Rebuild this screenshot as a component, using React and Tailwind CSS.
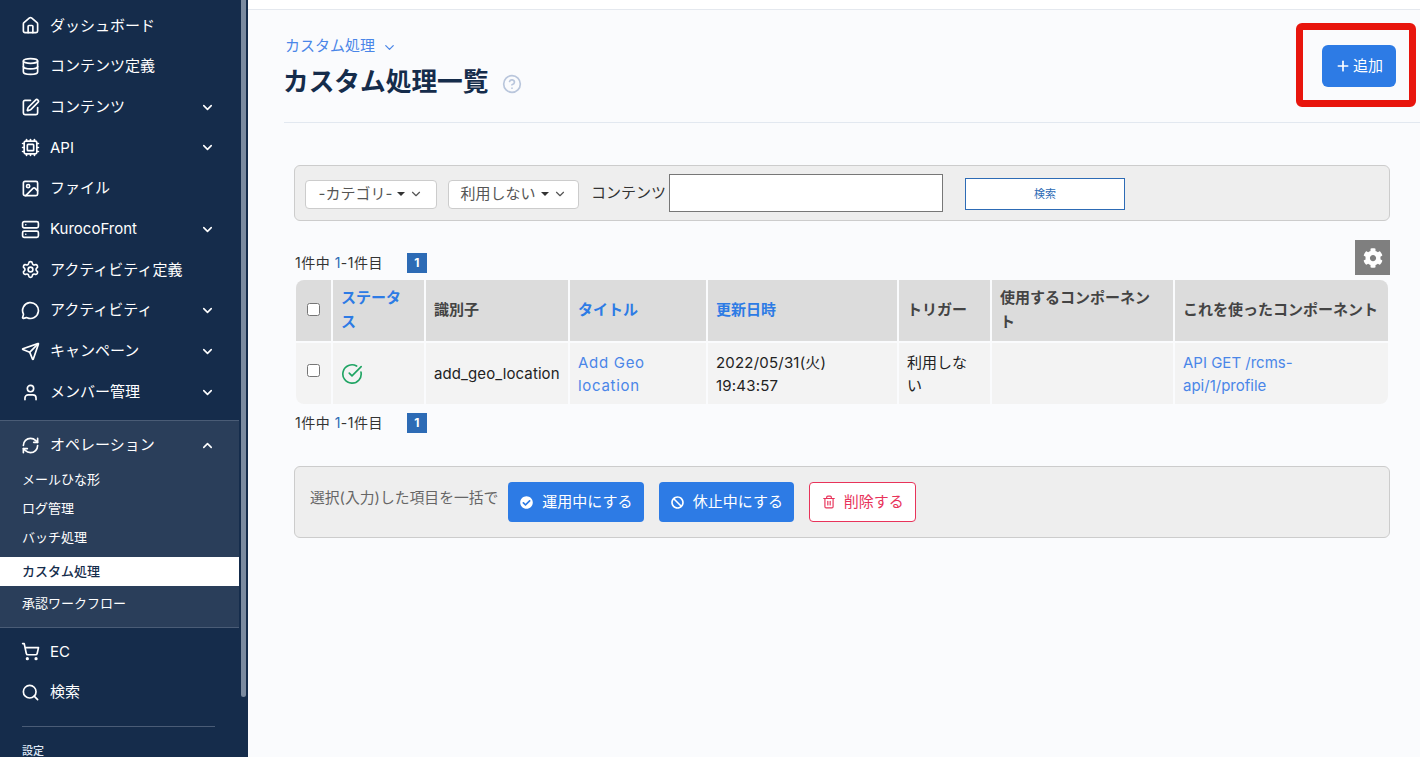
import {
  House,
  Database,
  SquarePen,
  Cpu,
  Image,
  Server,
  Settings,
  MessageCircle,
  Send,
  User,
  RefreshCw,
  ShoppingCart,
  Search,
  ChevronDown,
  ChevronUp,
  CircleHelp,
  CircleCheckBig,
  Trash2,
  Plus,
} from "lucide-react";
import { FaCog, FaCheckCircle, FaBan } from "react-icons/fa";

const topMenu = [
  { label: "ダッシュボード", icon: House },
  { label: "コンテンツ定義", icon: Database },
  { label: "コンテンツ", icon: SquarePen, arrow: true },
  { label: "API", icon: Cpu, arrow: true },
  { label: "ファイル", icon: Image },
  { label: "KurocoFront", icon: Server, arrow: true },
  { label: "アクティビティ定義", icon: Settings },
  { label: "アクティビティ", icon: MessageCircle, arrow: true },
  { label: "キャンペーン", icon: Send, arrow: true },
  { label: "メンバー管理", icon: User, arrow: true },
];

function MenuRow({ label, icon: Icon, arrow, up }) {
  return (
    <div className="flex h-[40.7px] items-center pl-[21px] pr-[24px] text-[15px] text-white">
      <Icon size={19} strokeWidth={2.1} className="mr-[10px] shrink-0" />
      <span className="flex-1">{label}</span>
      {arrow && <ChevronDown size={15} strokeWidth={2.5} />}
      {up && <ChevronUp size={15} strokeWidth={2.5} />}
    </div>
  );
}

function Sidebar() {
  return (
    <aside className="flex h-[757px] w-[248px] shrink-0 overflow-hidden bg-[#152c4b]">
      <div className="w-[239px] shrink-0">
        <div className="pt-[5.5px] pb-[7.5px]">
          {topMenu.map((m) => (
            <MenuRow key={m.label} {...m} />
          ))}
        </div>
        <div className="border-y border-[#4a5c76] bg-[#2a3e5a] pb-[8px] pt-[4px]">
          <MenuRow label="オペレーション" icon={RefreshCw} up />
          <div className="text-[13px] text-white">
            <div className="flex h-[29px] items-center pl-[22px]">メールひな形</div>
            <div className="flex h-[29px] items-center pl-[22px]">ログ管理</div>
            <div className="flex h-[29px] items-center pl-[22px]">バッチ処理</div>
            <div className="mt-[4.5px] flex h-[29px] items-center bg-white pl-[22px] font-medium text-[#152c4b]">
              カスタム処理
            </div>
            <div className="mt-[3.5px] flex h-[29px] items-center pl-[22px]">承認ワークフロー</div>
          </div>
        </div>
        <div className="pt-[4px]">
          <MenuRow label="EC" icon={ShoppingCart} />
          <MenuRow label="検索" icon={Search} />
        </div>
        <div className="mx-[22px] mt-[13px] w-[193px] border-t border-[#4a5c76]" />
        <div className="pl-[22px] pt-[19px] text-[11px] font-medium leading-[10px] text-[#dfe8f5]">設定</div>
      </div>
      <div className="w-[9px] shrink-0 pl-[2px]">
        <div className="h-[697px] w-[5px] rounded-b bg-[#7b8ba0]" />
      </div>
    </aside>
  );
}

function Pager() {
  return (
    <div className="flex items-center pl-[1px] text-[14px] leading-[20px] tracking-[0.5px] text-[#333]">
      <span className="w-[112px]">
        1件中 <span className="text-[#2d6bb5]">1</span>-1件目
      </span>
      <span className="flex h-[20px] w-[20px] items-center justify-center bg-[#2d6bb5] text-xs font-bold text-white">
        1
      </span>
    </div>
  );
}

function Select({ label, width }) {
  return (
    <div
      className={`mt-[2px] flex h-[29px] items-center justify-center rounded border border-[#ccc] bg-white text-[15px] text-[#555] ${width}`}
    >
      {label}
      <span className="ml-[5px] h-0 w-0 border-x-[4px] border-t-[4px] border-x-transparent border-t-[#333]" />
      <ChevronDown size={14} className="ml-[4px] text-[#555]" />
    </div>
  );
}

function Table() {
  const th = "bg-[#dcdcdc] px-[8px] pb-[2px] text-left align-middle text-[15px] font-bold leading-[24px]";
  const td = "bg-[#f3f3f3] px-[8px] align-middle text-[15px] leading-[23px]";
  return (
    <table className="w-[1096px] table-fixed border-separate border-spacing-[2px]">
      <colgroup>
        <col className="w-[35px]" />
        <col className="w-[91px]" />
        <col className="w-[142px]" />
        <col className="w-[136px]" />
        <col className="w-[189px]" />
        <col className="w-[91px]" />
        <col className="w-[181px]" />
        <col className="w-[213px]" />
      </colgroup>
      <thead>
        <tr className="h-[61px]">
          <th className="rounded-tl-lg bg-[#dcdcdc] text-center align-middle">
            <input type="checkbox" className="mb-[6px] h-[13px] w-[13px] align-middle" />
          </th>
          <th className={`${th} text-[#2d7be5]`}>
            ステータ
            <br />ス
          </th>
          <th className={`${th} text-[14px] text-[#444]`}>識別子</th>
          <th className={`${th} text-[#2d7be5]`}>タイトル</th>
          <th className={`${th} text-[#2d7be5]`}>更新日時</th>
          <th className={`${th} text-[#444]`}>トリガー</th>
          <th className={`${th} text-[#444]`}>
            使用するコンポーネン
            <br />ト
          </th>
          <th className={`${th} whitespace-nowrap rounded-tr-lg text-[#444]`}>これを使ったコンポーネント</th>
        </tr>
      </thead>
      <tbody>
        <tr className="h-[61px]">
          <td className={`${td} rounded-bl-lg text-center`}>
            <input type="checkbox" className="mb-[8px] h-[13px] w-[13px] align-middle" />
          </td>
          <td className={td}>
            <CircleCheckBig size={22} strokeWidth={1.8} className="text-[#1fa463]" />
          </td>
          <td className={`${td} whitespace-nowrap tracking-[0.1px] text-[#222]`}>add_geo_location</td>
          <td className={`${td} tracking-[0.7px] text-[#4a86e8]`}>
            Add Geo
            <br />
            location
          </td>
          <td className={`${td} tracking-[0.2px] text-[#222]`}>
            2022/05/31(火)
            <br />
            19:43:57
          </td>
          <td className={`${td} text-[#222]`}>
            利用しな
            <br />い
          </td>
          <td className={td}></td>
          <td className={`${td} rounded-br-lg text-[#4a86e8]`}>
            API GET /rcms-
            <br />
            api/1/profile
          </td>
        </tr>
      </tbody>
    </table>
  );
}

export default function App() {
  return (
    <div
      className="relative flex h-[757px] overflow-hidden bg-[#fafbfd] text-[#152c4b]"
      style={{ fontFamily: "Inter, 'Noto Sans CJK JP', sans-serif" }}
    >
      <Sidebar />
      <main className="min-w-0 flex-1">
        <div className="h-[10px] border-b border-[#e4e8ee] bg-white" />

        {/* page header */}
        <div className="ml-[36px] flex h-[113px] items-start justify-between border-b border-[#e2e8f0] pr-[24px]">
          <div className="pt-[26px]">
            <div className="ml-[1px] flex items-center text-[15px] leading-[20px] text-[#4a86e8]">
              カスタム処理
              <ChevronDown size={15} className="ml-[7px] mt-[2px]" />
            </div>
            <h1 className="-ml-[1px] mt-[8px] flex items-center text-[25.7px] font-bold leading-[36px] text-[#152c4b]">
              カスタム処理一覧
              <CircleHelp size={20} className="ml-[13px] mt-[3px] text-[#b9c6dc]" />
            </h1>
          </div>
          <button className="mt-[35px] flex h-[42px] w-[74px] items-center justify-center rounded-md bg-[#2d7be5] text-[15px] text-white">
            <Plus size={16} strokeWidth={2.5} className="mr-[2px]" />
            追加
          </button>
        </div>

        <div className="ml-[46px] w-[1096px]">
          {/* filter */}
          <div className="mt-[42px] flex h-[56px] items-center rounded-md border border-[#ccc] bg-[#eeeeee] pl-[10px] text-[15px]">
            <Select label="-カテゴリ-" width="w-[132px]" />
            <div className="w-[11px]" />
            <Select label="利用しない" width="w-[131px]" />
            <span className="ml-[12px] text-[#333]">コンテンツ</span>
            <input className="ml-[3px] h-[38px] w-[274px] border border-[#777] bg-white" />
            <button className="ml-[22px] mt-[2px] h-[32px] w-[160px] border border-[#2d6bb5] bg-white text-[11px] text-[#2d6bb5]">
              検索
            </button>
          </div>

          <div className="mt-[19px] flex items-end justify-between">
            <div className="pb-[2px]"><Pager /></div>
            <div className="flex h-[35px] w-[35px] items-center justify-center bg-[#7f7f7f] text-white">
              <FaCog size={20} />
            </div>
          </div>

          <div className="mt-[3px]"><Table /></div>

          <div className="mt-[7px]"><Pager /></div>

          {/* bulk actions */}
          <div className="mt-[33px] flex h-[72px] items-center rounded-md border border-[#ccc] bg-[#eeeeee] pl-[15px] text-[15px]">
            <span className="mb-[8px] text-[14.8px] text-[#666]">選択(入力)した項目を一括で</span>
            <button className="ml-[10px] flex h-[40px] w-[136px] items-center justify-center rounded-sm bg-[#2d7be5] text-white">
              <FaCheckCircle size={13} className="mr-[9px]" />
              運用中にする
            </button>
            <button className="ml-[15px] flex h-[40px] w-[135px] items-center justify-center rounded-sm bg-[#2d7be5] text-white">
              <FaBan size={13} className="mr-[9px]" />
              休止中にする
            </button>
            <button className="ml-[15px] flex h-[40px] w-[107px] items-center justify-center rounded-sm border border-[#e8335a] bg-white text-[#e8335a]">
              <Trash2 size={14} className="mr-[8px]" />
              削除する
            </button>
          </div>
        </div>
      </main>

      {/* red annotation around the add button */}
      <div className="absolute left-[1296px] top-[23px] h-[84px] w-[120px] rounded-[6px] border-[7px] border-[#e8150d]" />
    </div>
  );
}
